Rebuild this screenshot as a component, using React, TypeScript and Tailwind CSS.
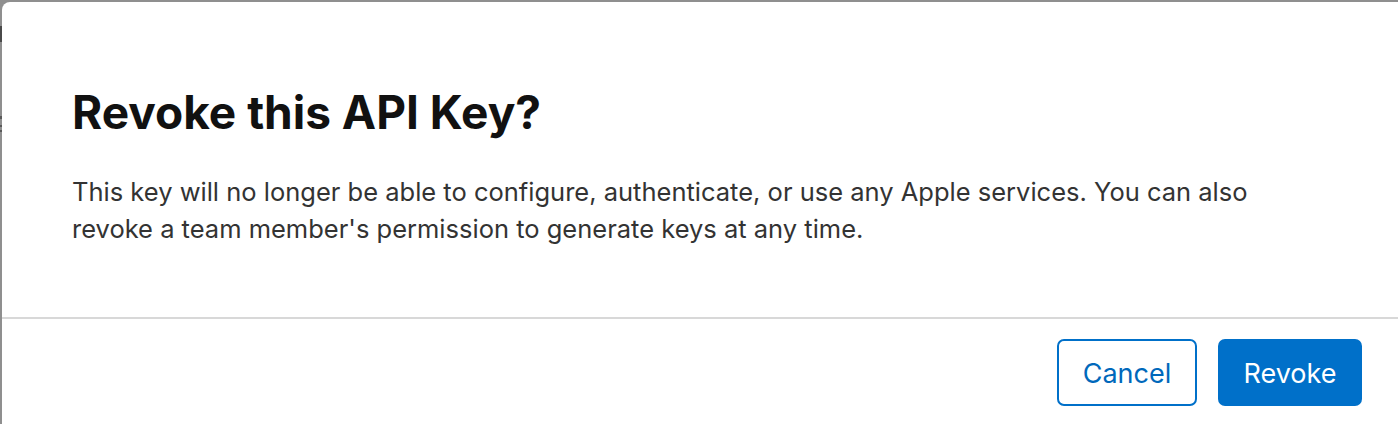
export default function App() {
  return (
    <div className="flex w-[1398px] h-[424px] overflow-hidden bg-[#8f8f8f] font-['Inter','Liberation_Sans',sans-serif]">
      {/* page behind the backdrop peeking out at the left edge */}
      <div className="flex w-[2px] shrink-0 flex-col pt-[26px]">
        <div className="h-[16px] bg-[#4a4a4a]" />
        <div className="mt-[74px] h-[3px] bg-[#5a5a5a]" />
        <div className="mt-[6px] h-[2px] bg-[#5a5a5a]" />
        <div className="mt-[3px] h-[2px] bg-[#5a5a5a]" />
      </div>

      {/* dialog */}
      <div className="mt-[2px] flex h-[440px] flex-1 flex-col rounded-l-[8px] bg-white">
        <div className="px-[70px] pt-[83px]">
          <h1 className="text-[46px] leading-[54px] font-bold text-[#111111]">
            Revoke this API Key?
          </h1>
          <p className="mt-[35px] text-[25.5px] leading-[36.5px] text-[#333333]">
            This key will no longer be able to configure, authenticate, or use any Apple services. You can also
            <br />
            revoke a team member's permission to generate keys at any time.
          </p>
        </div>

        <div className="mt-[70px] h-[2px] bg-[#d8d8d8]" />

        <div className="flex justify-end gap-[21px] pt-[20px] pr-[36px]">
          <button className="h-[67px] w-[140px] rounded-[7px] border-2 border-[#0070c9] bg-white pt-[4px] text-[27px] text-[#0068bb]">
            Cancel
          </button>
          <button className="h-[67px] w-[144px] rounded-[7px] bg-[#0070c9] pt-[4px] text-[27px] text-white">
            Revoke
          </button>
        </div>
      </div>
    </div>
  );
}
